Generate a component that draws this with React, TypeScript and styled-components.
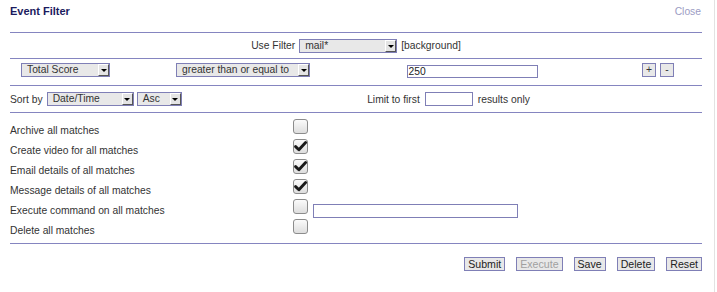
import React from "react";
import styled, { createGlobalStyle } from "styled-components";

const Global = createGlobalStyle`
  html, body { margin: 0; padding: 0; background: #fff; }
  body { font-family: "Liberation Sans", Arial, sans-serif; font-size: 10.3px; color: #333; }
`;

const Frame = styled.div`
  width: 715px;
  height: 292px;
  border-right: 1px solid #e2e2e2;
  box-sizing: border-box;
`;

const Panel = styled.div`
  margin-left: 10px;
  width: 692px;
`;

const Header = styled.div`
  display: flex;
  justify-content: space-between;
  align-items: flex-start;
  height: 32px;
  border-bottom: 1px solid #8585c0;
  box-sizing: content-box;
`;

const Title = styled.div`
  padding-top: 5px;
  font-weight: bold;
  font-size: 11px;
  line-height: 13px;
  color: #1b1b5e;
`;

const Close = styled.div`
  padding-top: 5px;
  margin-right: 1px;
  font-size: 10.3px;
  line-height: 13px;
  color: #9c9cc4;
`;

const Section = styled.div<{ $h: number }>`
  height: ${(p) => p.$h}px;
  border-bottom: 1px solid #8585c0;
  box-sizing: content-box;
`;

const CenterRow = styled.div`
  display: flex;
  justify-content: center;
  align-items: center;
  gap: 4px;
  height: 100%;
`;

const CritRow = styled.div`
  display: grid;
  grid-template-columns: 146px 174px 284px 88px;
  align-items: start;
  padding-top: 4px;
`;

const Cell = styled.div<{ $align?: string; $pl?: number; $mt?: number }>`
  display: flex;
  justify-content: ${(p) => p.$align ?? "center"};
  padding-left: ${(p) => p.$pl ?? 0}px;
  margin-top: ${(p) => p.$mt ?? 0}px;
  gap: 4px;
`;

const SortRow = styled.div`
  display: grid;
  grid-template-columns: 185px 1fr;
  align-items: center;
  padding-top: 6px;
`;

const Inline = styled.div<{ $center?: boolean; $gap?: number }>`
  display: flex;
  align-items: center;
  justify-content: ${(p) => (p.$center ? "center" : "flex-start")};
  gap: ${(p) => p.$gap ?? 4}px;
`;

const Label = styled.span`
  font-size: 10.3px;
  line-height: 13px;
  white-space: nowrap;
  color: #333;
`;

const SelectBox = styled.div<{ $w: number }>`
  position: relative;
  width: ${(p) => p.$w}px;
  height: 14px;
  box-sizing: border-box;
  border: 1px solid #7f7fb6;
  background: #e8e8e8;
  font-size: 10.3px;
  line-height: 12px;
  padding-left: 5px;
  color: #333;
  white-space: nowrap;
  overflow: hidden;
`;

const Arrow = styled.span`
  position: absolute;
  right: 0;
  top: 0;
  width: 11px;
  height: 12px;
  box-sizing: border-box;
  background: #e4e4e4;
  border-right: 1px solid #555;
  border-bottom: 1px solid #555;
  border-left: 1px solid #fff;
  border-top: 1px solid #fff;
  display: flex;
  align-items: center;
  justify-content: center;
  &::after {
    content: "";
    display: block;
    width: 0;
    height: 0;
    border-left: 3px solid transparent;
    border-right: 3px solid transparent;
    border-top: 3px solid #000;
    margin-top: 1px;
  }
`;

const TextInput = styled.div<{ $w: number; $h?: number }>`
  width: ${(p) => p.$w}px;
  height: ${(p) => p.$h ?? 14}px;
  box-sizing: border-box;
  border: 1px solid #7f7fb6;
  background: #fff;
  font-size: 10.3px;
  line-height: ${(p) => (p.$h ?? 14) - 2}px;
  padding-left: 1px;
  color: #222;
`;

const SmallBtn = styled.div`
  width: 14px;
  height: 14px;
  box-sizing: border-box;
  border: 1px solid #7f7fb6;
  background: #e8e8e8;
  font-size: 10.3px;
  line-height: 12px;
  text-align: center;
  color: #333;
`;

const Actions = styled.div`
  padding: 7px 0 3px;
  border-bottom: 1px solid #8585c0;
`;

const ActionRow = styled.div`
  display: grid;
  grid-template-columns: 283px 1fr;
  height: 20px;
  align-items: center;
`;

const BoxCell = styled.div`
  display: flex;
  align-items: flex-start;
  gap: 5px;
  align-self: stretch;
`;

const Check = styled.span`
  width: 15px;
  height: 15px;
  margin-top: -1px;
  box-sizing: border-box;
  border: 1px solid #8c8c8c;
  border-radius: 3px;
  background: linear-gradient(#fbfbfb, #dedede);
  display: flex;
  align-items: center;
  justify-content: center;
  flex: none;
`;

const ExecInput = styled(TextInput)`
  margin-top: 4px;
`;

const Buttons = styled.div`
  display: flex;
  justify-content: flex-end;
  gap: 11px;
  padding-top: 13px;
`;

const Button = styled.div<{ $disabled?: boolean }>`
  height: 14px;
  box-sizing: border-box;
  border: 1px solid #7f7fb6;
  background: #e8e8e8;
  padding: 0 3px;
  font-size: 10.6px;
  line-height: 12px;
  color: ${(p) => (p.$disabled ? "#a0a0a0" : "#222")};
`;

const Select = ({ w, value }: { w: number; value: string }) => (
  <SelectBox $w={w}>
    {value}
    <Arrow />
  </SelectBox>
);

const CheckMark = () => (
  <svg width="13" height="11" viewBox="0 0 13 11">
    <path d="M1.6 5.6 L4.9 8.8 L11.6 1.6" fill="none" stroke="#1a1a1a" strokeWidth="2.9" strokeLinecap="round" strokeLinejoin="round" />
  </svg>
);

const actions: { label: string; checked: boolean; input?: boolean }[] = [
  { label: "Archive all matches", checked: false },
  { label: "Create video for all matches", checked: true },
  { label: "Email details of all matches", checked: true },
  { label: "Message details of all matches", checked: true },
  { label: "Execute command on all matches", checked: false, input: true },
  { label: "Delete all matches", checked: false },
];

export default function App() {
  return (
    <Frame>
      <Global />
      <Panel>
        <Header>
          <Title>Event Filter</Title>
          <Close>Close</Close>
        </Header>
        <Section $h={25}>
          <CenterRow>
            <Label>Use Filter</Label>
            <Select w={98} value="mail*" />
            <Label>[background]</Label>
          </CenterRow>
        </Section>
        <Section $h={26}>
          <CritRow>
            <Cell $align="flex-start" $pl={11}>
              <Select w={89} value="Total Score" />
            </Cell>
            <Cell>
              <Select w={134} value="greater than or equal to" />
            </Cell>
            <Cell $mt={2}>
              <TextInput $w={131} $h={13}>250</TextInput>
            </Cell>
            <Cell>
              <SmallBtn>+</SmallBtn>
              <SmallBtn>-</SmallBtn>
            </Cell>
          </CritRow>
        </Section>
        <Section $h={26}>
          <SortRow>
            <Inline>
              <Label>Sort by</Label>
              <Inline $gap={3}>
                <Select w={87} value="Date/Time" />
                <Select w={45} value="Asc" />
              </Inline>
            </Inline>
            <Inline $center $gap={5}>
              <Label>Limit to first</Label>
              <TextInput $w={48} />
              <Label>results only</Label>
            </Inline>
          </SortRow>
        </Section>
        <Actions>
          {actions.map((a) => (
            <ActionRow key={a.label}>
              <Label>{a.label}</Label>
              <BoxCell>
                <Check>{a.checked && <CheckMark />}</Check>
                {a.input && <ExecInput $w={205} />}
              </BoxCell>
            </ActionRow>
          ))}
        </Actions>
        <Buttons>
          <Button>Submit</Button>
          <Button $disabled>Execute</Button>
          <Button>Save</Button>
          <Button>Delete</Button>
          <Button>Reset</Button>
        </Buttons>
      </Panel>
    </Frame>
  );
}
